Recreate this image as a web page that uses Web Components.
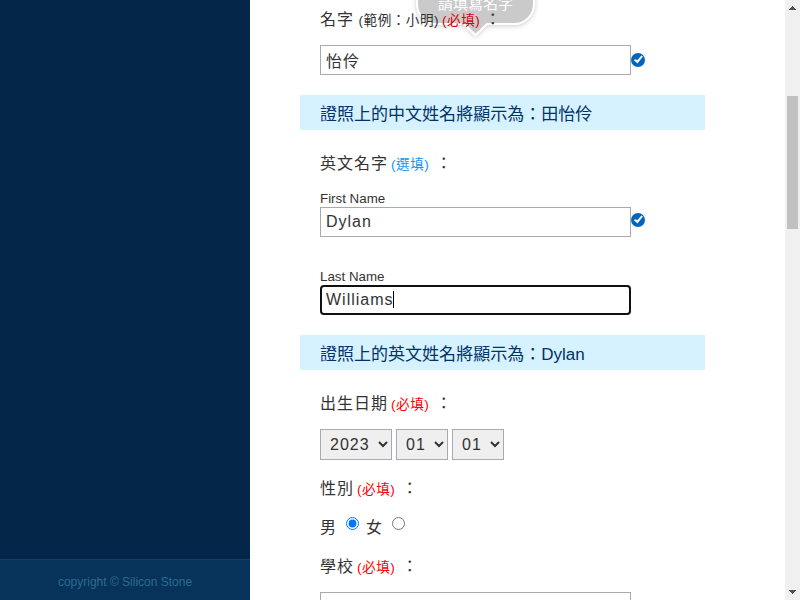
<!DOCTYPE html>
<html lang="zh-Hant"><head><meta charset="utf-8"><title>Registration</title>
<style>html,body{margin:0;height:100%;overflow:hidden;background:#fff}body{font-family:"Liberation Sans","Noto Sans CJK TC",sans-serif;color:#333}</style></head>
<body><app-page></app-page>
<script>
const define=(name,html,init)=>{
  const t=document.createElement('template');t.innerHTML=html;
  customElements.define(name,class extends HTMLElement{
    constructor(){super();this.attachShadow({mode:'open'}).append(t.content.cloneNode(true));}
    connectedCallback(){if(init)init(this,this.shadowRoot);}
  });
};
define('side-panel',`<style>:host{display:flex;flex-direction:column;width:250px;flex:none;background:#042749}
.fill{flex:1}footer{height:40px;border-top:1px solid #11426e;background:#073259;color:#2d6b92;font-size:12px;line-height:44px;text-align:center}</style>
<div class="fill"></div><footer><slot></slot></footer>`);
define('field-label',`<style>:host{display:block;height:var(--h);padding-top:var(--t,0px);box-sizing:border-box;font-size:16px;line-height:24px;letter-spacing:1px;white-space:nowrap;padding-left:20px}
::slotted(small){font-size:13.6px;letter-spacing:.5px;margin-left:3px}::slotted(.req),::slotted(.opt){margin-right:var(--mr,6.5px)}::slotted(.eg){margin:0 0 0 4.5px}</style><slot></slot>`);
define('small-label',`<style>:host{display:block;padding:0 20px;font-size:13.33px;line-height:18px;height:17px}</style><slot></slot>`);
define('check-badge',`<style>:host{display:block;width:14px;height:14px}svg{display:block}</style>
<svg width="14" height="14" viewBox="0 0 14 14"><circle cx="7" cy="7" r="7" fill="#0364c0"/><path d="M2.700 6.900L5.100 6.200L6.100 7.600L10.400 2.400L11.900 3.500L6.500 10.600Z" fill="#fff"/></svg>`);
define('text-field',`<style>:host{display:flex;align-items:flex-start;height:30px;padding-left:20px}
.box{box-sizing:border-box;width:311px;height:30px;border:1px solid #a9a9b0;padding:0 5px;font-size:16px;line-height:var(--lh,28px);letter-spacing:1px;background:#fff;white-space:nowrap}
:host([focused]) .box{border:2px solid #101010;border-radius:4px;padding:0 4px;line-height:26px}
:host([focused]) .box::after{content:"";display:inline-block;width:1px;height:17px;background:#000;vertical-align:-3px;margin-left:-1px}
check-badge{display:none;margin-top:var(--badge,8px)}:host([valid]) check-badge{display:block}</style>
<div class="box"><slot></slot></div><check-badge></check-badge>`);
define('name-banner',`<style>:host{display:block;width:405px;height:35px;box-sizing:border-box;padding-left:20px;background:#d6f1ff;color:#036;font-size:17.03px;line-height:39px;white-space:nowrap}</style><slot></slot>`);
define('date-select',`<style>:host{display:block}select{display:block;width:var(--w);height:31px;box-sizing:border-box;margin:0;border:1px solid #a9a9b0;border-radius:0;background:#efefef;color:#333;font:16px "Liberation Sans","Noto Sans CJK TC",sans-serif;letter-spacing:1px;padding:0 0 0 5px}</style><select><option></option></select>`,
(h,r)=>{r.querySelector('option').textContent=h.getAttribute('value');});
define('date-row',`<style>:host{display:flex;gap:4px;padding-left:20px;height:31px}</style><slot></slot>`);
define('gender-row',`<style>:host{display:flex;height:30px;padding-left:20px;align-items:flex-start;font-size:16px;line-height:26px}
span{width:16px}input{width:13px;height:13px;margin:2px 7px 0 10px}</style>
<span>男</span><input type="radio" name="g" checked><span>女</span><input type="radio" name="g">`);
define('hint-bubble',`<style>:host{position:absolute;z-index:-1;left:116px;top:-21px;width:119px;height:59px}
svg{display:block;overflow:visible}
div{position:absolute;left:0;top:14px;width:119px;text-align:center;font-size:15px;line-height:22px;color:#fff}</style>
<svg width="119" height="59"><defs><filter id="soft" x="-20%" y="-20%" width="140%" height="150%"><feGaussianBlur in="SourceAlpha" stdDeviation="2.500" result="b"/><feOffset in="b" dy="1" result="o"/><feComposite in="o" in2="SourceAlpha" operator="out"/></filter></defs>
<path filter="url(#soft)" opacity=".2" d="M20 0H99A20 20 0 0 1 119 20V25A21 21 0 0 1 98 46H71L59.500 57.500L48 46H21A21 21 0 0 1 0 25V20A20 20 0 0 1 20 0Z"/>
<path d="M20 1H99A19 19 0 0 1 118 20V25A20 20 0 0 1 98 45H71L59.500 56L48 45H21A20 20 0 0 1 1 25V20A19 19 0 0 1 20 1Z" fill="#cacaca" stroke="#fff" stroke-width="2"/></svg><div><slot></slot></div>`);
define('scroll-bar',`<style>:host{display:flex;flex-direction:column;width:15px;background:#f0f0f0;align-items:center}
.thumb{width:11px;height:133px;background:#c1c1c1;margin-top:81px}.gap{flex:1}svg{display:block}</style>
<svg width="15" height="15" shape-rendering="crispEdges"><path d="M4 10L7.500 6L11 10Z" fill="#505050"/></svg><div class="thumb"></div><div class="gap"></div>
<svg width="15" height="15" shape-rendering="crispEdges"><path d="M4 5L7.500 9L11 5Z" fill="#505050"/></svg>`);
define('app-page',`<style>:host{display:flex;width:800px;height:600px;overflow:hidden}
main{position:relative;isolation:isolate;flex:1;margin-left:50px;overflow:hidden}
.req{color:#f00}.req.dim{color:#d8000c}.opt{color:#1095f5}.gap{height:20px}.gap.wide{height:31px}</style>
<side-panel>copyright © Silicon Stone</side-panel>
<main>
<field-label style="--h:45px;--t:8px;--mr:4.5px">名字<small class="eg">(範例：小明)</small><small class="req dim">(必填)</small>：</field-label>
<text-field valid style="--lh:31px">怡伶</text-field><div class="gap"></div>
<name-banner>證照上的中文姓名將顯示為：田怡伶</name-banner>
<field-label style="--h:60px;--t:22px">英文名字<small class="opt">(選填)</small>：</field-label>
<small-label>First Name</small-label><text-field valid style="--badge:6px">Dylan</text-field>
<div class="gap wide"></div>
<small-label>Last Name</small-label><text-field focused>Williams</text-field><div class="gap"></div>
<name-banner>證照上的英文姓名將顯示為：Dylan</name-banner>
<field-label style="--h:59px;--t:22px">出生日期<small class="req">(必填)</small>：</field-label>
<date-row><date-select value="2023" style="--w:72px"></date-select><date-select value="01" style="--w:52px"></date-select><date-select value="01" style="--w:52px"></date-select></date-row>
<field-label style="--h:55px;--t:17px">性別<small class="req">(必填)</small>：</field-label>
<gender-row></gender-row>
<field-label style="--h:47px;--t:10px">學校<small class="req">(必填)</small>：</field-label>
<text-field></text-field>
<hint-bubble>請填寫名字</hint-bubble>
</main>
<scroll-bar></scroll-bar>`);
</script></body></html>
